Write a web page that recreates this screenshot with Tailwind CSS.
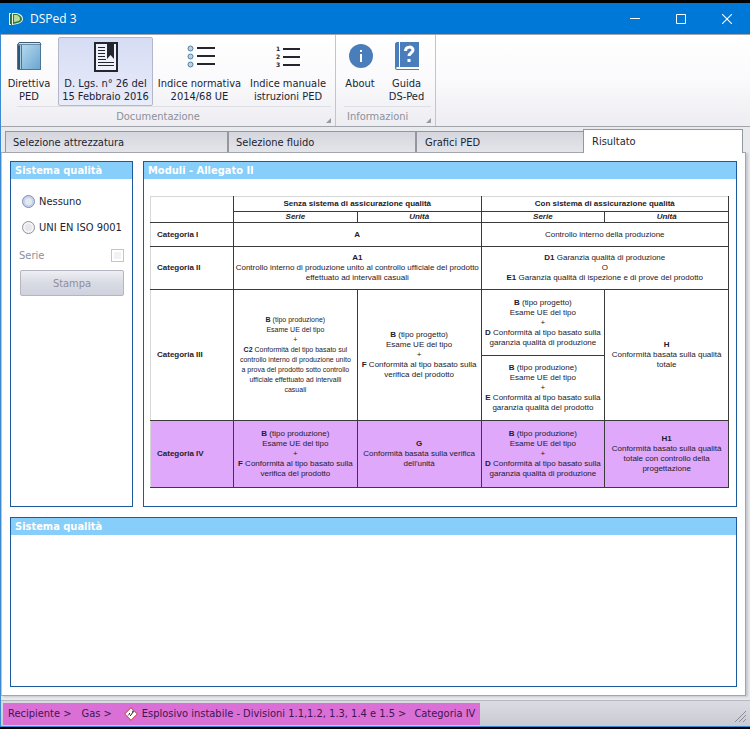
<!DOCTYPE html>
<html lang="it">
<head>
    <meta charset="UTF-8">
    <meta name="viewport" content="width=device-width, initial-scale=1.0">
    <title>DSPed 3</title>
    <script src="https://cdn.jsdelivr.net/npm/@tailwindcss/browser@4"></script>
</head>
<body class="min-h-screen flex flex-col bg-black pt-[3px] pb-[2px] text-[11px] leading-[13px] text-[#201f35] font-['Tahoma','DejaVu_Sans_Condensed','DejaVu_Sans',sans-serif]">
    <!-- Title bar -->
    <header class="h-[31px] shrink-0 flex items-center bg-[#0078d7] text-white pl-2">
        <svg class="w-4 h-4" viewBox="0 0 16 16">
            <path d="M1 2h2v12H1z" fill="#e8f4e4"/>
            <path d="M2 3h1v10H2z" fill="#2f6b3a"/>
            <path d="M4 2h5c4 1 6 3 6 6s-3 5-11 6z" fill="#e9f2dc"/>
            <path d="M5 3h4c3 1 5 3 5 5s-2 4-9 5z" fill="#2f7a3c"/>
            <path d="M6 4h3c2 1 3 2 3 4s-2 2-6 3z" fill="#b9dc9a"/>
        </svg>
        <h1 class="ml-[6px] text-xs font-['Segoe_UI','Open_Sans',sans-serif]">DSPed 3</h1>
        <div class="ml-auto flex h-full">
            <button aria-label="Riduci a icona" class="w-[46px] flex items-center justify-center"><svg class="w-[10px] h-[10px]" viewBox="0 0 10 10"><path d="M0 4.500h10" stroke="#fff"/></svg></button>
            <button aria-label="Ingrandisci" class="w-[46px] flex items-center justify-center"><svg class="w-[10px] h-[10px]" viewBox="0 0 10 10"><path d="M.5 .5h9v9h-9z" stroke="#fff" fill="none"/></svg></button>
            <button aria-label="Chiudi" class="w-[46px] flex items-center justify-center"><svg class="w-[10px] h-[10px]" viewBox="0 0 10 10"><path d="M0 0l10 10M10 0L0 10" stroke="#fff" stroke-width="1.1"/></svg></button>
        </div>
    </header>

    <div class="flex-1 flex flex-col bg-[#e9eaee] border-l border-b border-[#3c8ad0]">
        <!-- Ribbon -->
        <nav class="flex h-[93px] shrink-0 bg-linear-to-b from-white via-[#fafafc] to-[#ededf2] border-t border-b border-[#a3a5ad]">
            <section class="w-[335px] flex flex-col border-r border-[#c3c5cd]">
                <div class="flex gap-px px-px pt-[2px]">
                    <button class="w-[54px] h-[69px] flex flex-col items-center border border-transparent">
                        <svg class="w-8 h-9 mt-1 -mb-px" viewBox="0 0 32 36">
                            <defs><linearGradient id="cover" x1="0" y1="0" x2="1" y2="1"><stop offset="0" stop-color="#b4d8ee"/><stop offset="1" stop-color="#6ba6d0"/></linearGradient></defs>
                            <path d="M6 .5h21l1 2.500H4.500z" fill="#d5e0e9" stroke="#3c5d79"/>
                            <path d="M4 2.500h24V28H5l-1-1z" fill="#4a7597"/>
                            <path d="M5 4h2v23H5z" fill="#2f5575"/>
                            <path d="M7 3h1v24H7z" fill="#a9cbe2"/>
                            <path d="M9 3h18v24H9z" fill="url(#cover)"/>
                        </svg>
                        <span>Direttiva<br>PED</span>
                    </button>
                    <button class="w-[95px] h-[69px] ml-px flex flex-col items-center border border-[#b3b7c9] rounded-xs bg-linear-to-b from-[#d6dcf4] to-[#e9ecf9]">
                        <svg class="w-8 h-9 mt-1 -mb-px" viewBox="0 0 32 36">
                            <path d="M5 1h22v28H5z" fill="#eef0fa" stroke="#25252f" stroke-width="2"/>
                            <path d="M17 1h7v16l-3.500-4-3.500 4z" fill="#25252f"/>
                            <path d="M8 5.500h7M8 8.500h7M8 11.500h7M8 14.500h7M8 17.500h8M8 20.500h16M8 23.500h16" stroke="#25252f"/>
                        </svg>
                        <span class="whitespace-nowrap">D. Lgs. n° 26 del<br>15 Febbraio 2016</span>
                    </button>
                    <button class="w-[91px] h-[69px] flex flex-col items-center border border-transparent">
                        <svg class="w-8 h-9 mt-1 -mb-px" viewBox="0 0 32 36">
                            <g fill="#b7d5ea" stroke="#527da3"><circle cx="6.500" cy="6.500" r="2.500"/><circle cx="6.500" cy="14.500" r="2.500"/><circle cx="6.500" cy="22.500" r="2.500"/></g>
                            <path d="M13 6h18M13 14h18M13 22h18" stroke="#25252f" stroke-width="2"/>
                        </svg>
                        <span class="whitespace-nowrap">Indice normativa<br>2014/68 UE</span>
                    </button>
                    <button class="w-[84px] h-[69px] flex flex-col items-center border border-transparent">
                        <svg class="w-8 h-9 mt-1 -mb-px" viewBox="0 0 32 36">
                            <g fill="#25252f" font-size="6" font-weight="bold" font-family="DejaVu Sans"><text x="4" y="9">1</text><text x="4" y="17">2</text><text x="4" y="25">3</text></g>
                            <path d="M11 7h17M11 15h17M11 23h17" stroke="#25252f" stroke-width="2"/>
                        </svg>
                        <span class="whitespace-nowrap">Indice manuale<br>istruzioni PED</span>
                    </button>
                </div>
                <div class="flex-1 ml-4 mr-1 pr-8 border-t border-[#dedfe5] flex items-center justify-center relative text-[#8d8f9b]">
                    Documentazione
                    <svg class="absolute right-0 bottom-[3px] w-[5px] h-[5px]" viewBox="0 0 5 5"><path d="M5 0v5H0z" fill="#9a9ca5"/></svg>
                </div>
            </section>
            <section class="w-[100px] flex flex-col border-r border-[#c3c5cd]">
                <div class="flex px-px pt-[2px]">
                    <button class="w-[46px] h-[69px] flex flex-col items-center border border-transparent">
                        <svg class="w-8 h-9 mt-1 -mb-px" viewBox="0 0 32 36">
                            <circle cx="17" cy="14" r="12" fill="#4a7ebb"/>
                            <path d="M16 8h2v2h-2zM16 12h2v8h-2z" fill="#fff"/>
                        </svg>
                        <span>About</span>
                    </button>
                    <button class="w-[47px] h-[69px] flex flex-col items-center border border-transparent">
                        <svg class="w-8 h-9 mt-1 -mb-px" viewBox="0 0 32 36">
                            <path d="M6 0h22v25H6c-1 0-1 2 0 2h22v1H6c-1 0-2-1-2-2V2c0-1 1-2 2-2z" fill="#4a7ebb"/>
                            <path d="M8.500 0v25" stroke="#fff"/>
                            <path d="M14.500 9c0-5 7.500-5 7.500-1 0 3-4 3-4 6" fill="none" stroke="#fff" stroke-width="3"/>
                            <path d="M16.500 17h3v3h-3z" fill="#fff"/>
                        </svg>
                        <span class="whitespace-nowrap">Guida<br>DS-Ped</span>
                    </button>
                </div>
                <div class="flex-1 ml-2 mr-1 border-t border-[#dedfe5] flex items-center pl-[3px] relative text-[#8d8f9b]">
                    Informazioni
                    <svg class="absolute right-0 bottom-[3px] w-[5px] h-[5px]" viewBox="0 0 5 5"><path d="M5 0v5H0z" fill="#9a9ca5"/></svg>
                </div>
            </section>
        </nav>

        <!-- Tabs -->
        <div role="tablist" class="grid grid-cols-[223fr_188fr_167fr_160fr] items-end shrink-0 h-[26px] pl-1 pr-[7px] relative -mb-px">
            <button role="tab" class="h-[21px] mb-px px-[7px] text-left border border-b-0 border-[#9496a0] bg-linear-to-b from-[#d6d7de] to-[#e4e5ea]">Selezione attrezzatura</button>
            <button role="tab" class="h-[21px] mb-px px-[7px] text-left border border-b-0 border-[#9496a0] bg-linear-to-b from-[#d6d7de] to-[#e4e5ea]">Selezione fluido</button>
            <button role="tab" class="h-[21px] mb-px px-2 text-left border border-b-0 border-r-0 border-[#9496a0] bg-linear-to-b from-[#d6d7de] to-[#e4e5ea]">Grafici PED</button>
            <button role="tab" aria-selected="true" class="h-6 px-2 text-left border border-b-0 border-[#9496a0] bg-white">Risultato</button>
        </div>

        <main class="flex-1 flex flex-col gap-[10px] mr-1 mb-1 pt-2 pl-2 pr-2 pb-2 bg-white border border-[#a3a5ad] border-l-[#c3c5cd] shadow-[2px_1px_2px_#c6c7cc]">
            <div class="flex gap-[10px]">
                <fieldset class="w-[123px] shrink-0 border border-[#1b5a9c]">
                    <h2 class="h-[17px] pl-1 bg-[#87cefa] text-white font-bold leading-[17px]">Sistema qualità</h2>
                    <div class="pt-4 px-2">
                        <label class="flex items-center gap-1 h-[13px] pl-[3px] mb-[13px] whitespace-nowrap">
                            <input type="radio" name="sistema" class="appearance-none w-[13px] h-[13px] shrink-0 rounded-full border border-[#7d8cae] bg-[#e6e8ee] shadow-[inset_0_0_0_2px_#c4d3f0]">
                            Nessuno
                        </label>
                        <label class="flex items-center gap-1 h-[13px] pl-[3px] mb-[15px] whitespace-nowrap">
                            <input type="radio" name="sistema" class="appearance-none w-[13px] h-[13px] shrink-0 rounded-full border border-[#92949c] bg-[#e6e7eb] shadow-[inset_0_0_0_2px_#f4f4f6]">
                            UNI EN ISO 9001
                        </label>
                        <label class="flex items-center justify-between h-[13px] mb-2 text-[#8d8f9b]">
                            Serie
                            <input type="checkbox" disabled class="appearance-none w-[13px] h-[13px] border border-[#c3c4ca] bg-[#f2f2f4] shadow-[inset_0_0_0_2px_#fff]">
                        </label>
                        <button disabled class="w-[104px] h-[26px] ml-px text-[#8d8f9b] border border-[#b3b5c0] rounded-xs bg-linear-to-b from-[#eeeff3] via-[#d9dbe4] to-[#cfd2dd]">Stampa</button>
                    </div>
                </fieldset>

                <section class="flex-1 border border-[#1b5a9c]">
                    <h2 class="h-[17px] pl-1 bg-[#87cefa] text-white font-bold leading-[17px]">Moduli - Allegato II</h2>
                    <div class="pt-[17px] pl-[6px] pr-[7px] pb-[18px]">
                        <table class="w-full table-fixed border-collapse border border-[#d8d8d8] text-center text-[8px] leading-[10px] text-[#252028] font-['Liberation_Sans',sans-serif]">
                            <colgroup>
                                <col class="w-[83px]"><col><col><col><col>
                            </colgroup>
                            <thead>
                                <tr class="h-[15px]">
                                    <td rowspan="2" class="border-r border-b border-[#3a3a3a]"></td>
                                    <th colspan="2" class="border-r border-b border-[#3a3a3a]">Senza sistema di assicurazione qualità</th>
                                    <th colspan="2" class="border-r border-b border-[#3a3a3a]">Con sistema di assicurazione qualità</th>
                                </tr>
                                <tr class="h-[11px] italic">
                                    <th class="border-r border-b border-[#3a3a3a]">Serie</th>
                                    <th class="border-r border-b border-[#3a3a3a]">Unità</th>
                                    <th class="border-r border-b border-[#3a3a3a]">Serie</th>
                                    <th class="border-r border-b border-[#3a3a3a]">Unità</th>
                                </tr>
                            </thead>
                            <tbody>
                                <tr class="h-6">
                                    <th class="pl-[6px] text-left border-r border-b border-[#3a3a3a]">Categoria I</th>
                                    <td colspan="2" class="border-r border-b border-[#3a3a3a]"><b>A</b></td>
                                    <td colspan="2" class="border-r border-b border-[#3a3a3a]">Controllo interno della produzione</td>
                                </tr>
                                <tr class="h-[43px]">
                                    <th class="pl-[6px] text-left border-r border-b border-[#3a3a3a]">Categoria II</th>
                                    <td colspan="2" class="border-r border-b border-[#3a3a3a]"><b>A1</b><br>Controllo interno di produzione unito al controllo ufficiale del prodotto<br>effettuato ad intervalli casuali</td>
                                    <td colspan="2" class="border-r border-b border-[#3a3a3a]"><b>D1</b> Garanzia qualità di produzione<br>O<br><b>E1</b> Garanzia qualità di ispezione e di prove del prodotto</td>
                                </tr>
                                <tr class="h-[66px]">
                                    <th rowspan="2" class="pl-[6px] text-left border-r border-b border-[#3a3a3a]">Categoria III</th>
                                    <td rowspan="2" class="border-r border-b border-[#3a3a3a] text-[7px] whitespace-nowrap"><b>B</b> (tipo produzione)<br>Esame UE del tipo<br>+<br><b>C2</b> Conformità del tipo basato sul<br>controllo interno di produzione unito<br>a prova del prodotto sotto controllo<br>ufficiale effettuato ad intervalli<br>casuali</td>
                                    <td rowspan="2" class="border-r border-b border-[#3a3a3a]"><b>B</b> (tipo progetto)<br>Esame UE del tipo<br>+<br><b>F</b> Conformità al tipo basato sulla<br>verifica del prodotto</td>
                                    <td class="border-r border-b border-[#3a3a3a]"><b>B</b> (tipo progetto)<br>Esame UE del tipo<br>+<br><b>D</b> Conformità al tipo basato sulla<br>garanzia qualità di produzione</td>
                                    <td rowspan="2" class="border-r border-b border-[#3a3a3a]"><b>H</b><br>Conformità basata sulla qualità<br>totale</td>
                                </tr>
                                <tr class="h-[65px]">
                                    <td class="border-r border-b border-[#3a3a3a]"><b>B</b> (tipo produzione)<br>Esame UE del tipo<br>+<br><b>E</b> Conformità al tipo basato sulla<br>garanzia qualità del prodotto</td>
                                </tr>
                                <tr class="h-[67px] bg-[#dfa8fa]">
                                    <th class="pl-[6px] text-left border-r border-b border-[#3a3a3a]">Categoria IV</th>
                                    <td class="border-r border-b border-[#3a3a3a]"><b>B</b> (tipo produzione)<br>Esame UE del tipo<br>+<br><b>F</b> Conformità al tipo basato sulla<br>verifica del prodotto</td>
                                    <td class="border-r border-b border-[#3a3a3a]"><b>G</b><br>Conformità basata sulla verifica<br>dell'unità</td>
                                    <td class="border-r border-b border-[#3a3a3a]"><b>B</b> (tipo produzione)<br>Esame UE del tipo<br>+<br><b>D</b> Conformità al tipo basato sulla<br>garanzia qualità di produzione</td>
                                    <td class="border-r border-b border-[#3a3a3a]"><b>H1</b><br>Conformità basato sulla qualità<br>totale con controllo della<br>progettazione</td>
                                </tr>
                            </tbody>
                        </table>
                    </div>
                </section>
            </div>

            <section class="flex-1 border border-[#1b5a9c]">
                <h2 class="h-[17px] pl-1 bg-[#87cefa] text-white font-bold leading-[17px]">Sistema qualità</h2>
            </section>
        </main>

        <!-- Status bar -->
        <footer class="h-[26px] shrink-0 flex items-center justify-between pl-[2px] pr-1 border-t border-[#b8b9c0] bg-linear-to-b from-[#dbdce3] to-[#c9cad2]">
            <div class="h-[22px] flex items-center px-[5px] bg-[#da70d6] text-[#3d1650] whitespace-nowrap">
                <span>Recipiente &gt;</span>
                <span class="ml-[10px]">Gas &gt;</span>
                <svg class="w-[14px] h-[14px] ml-3 mr-1" viewBox="0 0 14 14">
                    <path d="M7 .7L13.300 7 7 13.300.7 7z" fill="#fff" stroke="#c8382f"/>
                    <path d="M4 8.500l1.500-1.500M5 6l1 1M7 8l2-3M8 4l2 1M6 9l1-1" stroke="#222"/>
                </svg>
                <span>Esplosivo instabile - Divisioni 1.1,1.2, 1.3, 1.4 e 1.5 &gt;</span>
                <span class="ml-2">Categoria IV</span>
            </div>
            <svg class="w-[11px] h-[11px] self-end mb-1" viewBox="0 0 11 11"><path d="M0 11L11 0M4 11l7-7M8 11l3-3" stroke="#8a8c95"/></svg>
        </footer>
    </div>
</body>
</html>
